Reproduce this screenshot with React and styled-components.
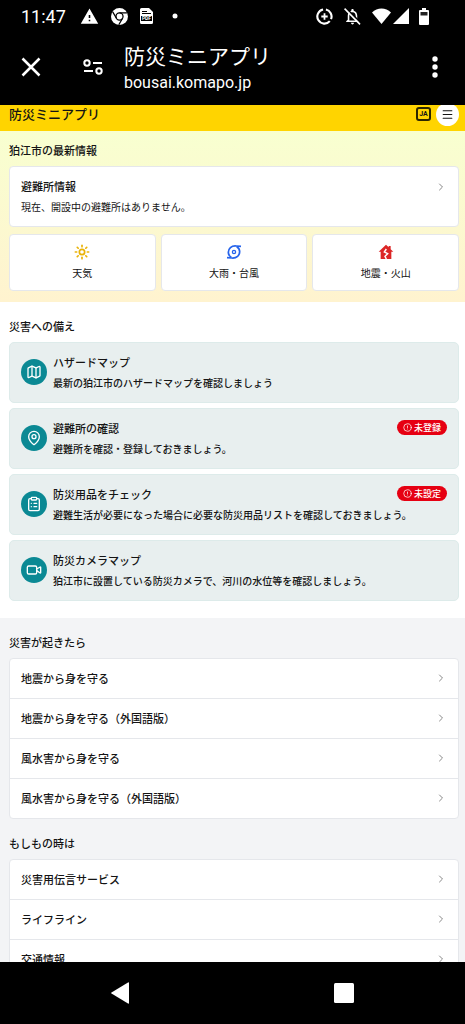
import React from 'react';
import styled, { createGlobalStyle, css } from 'styled-components';
import { ChevronRight, CircleAlert, ClipboardList, Map, MapPin, Menu, Sun, Video } from 'lucide-react';
import { MdNotificationsNone, MdWarning } from 'react-icons/md';

const GlobalStyle = createGlobalStyle`
    * {
        box-sizing: border-box;
    }
    body {
        margin: 0;
        background: #000;
        color: #141414;
        font-family: 'Noto Sans CJK JP', sans-serif;
    }
    a {
        color: inherit;
        text-decoration: none;
    }
    button {
        display: flex;
        align-items: center;
        justify-content: center;
        padding: 0;
        border: none;
        background: none;
        color: inherit;
        font: inherit;
        cursor: pointer;
    }
    svg {
        display: block;
        flex-shrink: 0;
    }
`;

const Phone = styled.div`
    display: flex;
    flex-direction: column;
    height: 100vh;
`;

const StatusBar = styled.div`
    display: flex;
    align-items: center;
    justify-content: space-between;
    flex-shrink: 0;
    height: 32px;
    padding: 0 36px 0 21px;
    color: #fff;
    font: 18px Roboto, sans-serif;

    .group {
        display: flex;
        align-items: center;
        gap: 12px;
    }
    .group.system {
        gap: 10px;
    }
    .clock {
        margin-right: 2px;
    }
    .signal {
        display: flex;
        gap: 2px;
    }
`;

const Toolbar = styled.header`
    display: flex;
    align-items: center;
    flex-shrink: 0;
    height: 73px;
    padding: 0 21px 4px;
    color: #fff;

    .titles {
        flex: 1;
        margin-left: 21px;
    }
    .title {
        font-size: 21px;
        line-height: 32px;
    }
    .url {
        font: 16px/24px Roboto, sans-serif;
    }
`;

const ToolButton = styled.button`
    width: ${props => props.$width}px;
    height: 40px;
    margin-right: ${props => props.$gap || 0}px;
`;

const Page = styled.main`
    flex: 1;
    min-height: 0;
    overflow: hidden;
    background: #f3f4f6;
`;

const AppBar = styled.div`
    display: flex;
    align-items: center;
    gap: 5px;
    height: 26px;
    padding: 0 6px 8px 9px;
    background: #ffd400;
    font-size: 13px;
    font-weight: 500;
    line-height: 18px;

    .name {
        flex: 1;
    }
`;

const LangButton = styled.button`
    && {
        width: 15px;
        height: 14px;
        border: 2px solid #2b2600;
        border-radius: 3px;
        font: bold 7px Roboto, sans-serif;
    }
`;

const MenuButton = styled.button`
    && {
        width: 23px;
        height: 23px;
        border-radius: 50%;
        background: #fff;
    }
`;

const Section = styled.section`
    padding: ${props => props.$pad || '0 6px 0 9px'};
    background: ${props => props.$bg || 'transparent'};
`;

const Heading = styled.h2`
    margin: 0 0 8px;
    font-size: 11px;
    font-weight: 500;
    line-height: 16px;
`;

const box = css`
    border: 1px solid #e5e7eb;
    border-radius: 4px;
    background: #fff;
`;

const ItemTitle = styled.div`
    font-size: 11px;
    font-weight: 500;
    line-height: 18px;
`;

const ItemText = styled.div`
    font-size: 10px;
    font-weight: ${props => props.$strong ? 500 : 400};
    line-height: 16px;
`;

const Notice = styled.a`
    ${box}
    display: flex;
    justify-content: space-between;
    height: 61px;
    padding: 10px 11px;

    .text {
        display: flex;
        flex-direction: column;
        gap: 4px;
    }
`;

const Chevron = styled(ChevronRight).attrs({ size: 12 })`
    margin-top: 4px;
    color: #888;
`;

const Tiles = styled.div`
    display: grid;
    grid-template-columns: repeat(3, 1fr);
    gap: 5px;
    margin-top: 7px;
`;

const Tile = styled.a`
    ${box}
    display: flex;
    flex-direction: column;
    align-items: center;
    gap: 5px;
    height: 57px;
    padding-top: 9px;
    font-size: 10px;
    line-height: 16px;
`;

const Cards = styled.div`
    display: flex;
    flex-direction: column;
    gap: 5px;
`;

const Card = styled.a`
    display: flex;
    align-items: center;
    gap: 6px;
    height: 61px;
    padding: 0 11px 2px;
    border: 1px solid #ddebea;
    border-radius: 5px;
    background: #e8efef;

    .body {
        flex: 1;
        display: flex;
        flex-direction: column;
        gap: 4px;
    }
    .row {
        display: flex;
        align-items: center;
        justify-content: space-between;
    }
`;

const IconCircle = styled.span`
    display: flex;
    align-items: center;
    justify-content: center;
    width: 26px;
    height: 26px;
    border-radius: 50%;
    background: #0b8994;
    color: #fff;
`;

const Badge = styled.span`
    display: flex;
    align-items: center;
    gap: 2px;
    height: 15px;
    padding: 0 6px;
    border-radius: 8px;
    background: #e60012;
    color: #fff;
    font-size: 9px;
    font-weight: 500;
`;

const List = styled.ul`
    ${box}
    margin: 0;
    padding: 0;
    list-style: none;

    li + li {
        border-top: 1px solid #e5e7eb;
    }
`;

const ListLink = styled.a`
    display: flex;
    align-items: center;
    justify-content: space-between;
    height: 39px;
    padding: 0 11px 2px;

    ${Chevron} {
        margin-top: 0;
    }
`;

const NavBar = styled.nav`
    display: flex;
    align-items: center;
    justify-content: space-around;
    flex-shrink: 0;
    height: 62px;
    padding: 0 8px;
    color: #fff;
`;

const ChromeIcon = () => (
    <svg width="17" height="17" viewBox="0 0 24 24">
        <circle cx="12" cy="12" r="12" fill="#fff" />
        <g fill="none" stroke="#000" strokeWidth="1.8">
            <circle cx="12" cy="12" r="5" />
            <path d="M12 7h10.5M7.7 14.5L2.4 5.5M16.3 14.5L11 23.6" />
        </g>
    </svg>
);

const PdfIcon = () => (
    <svg width="13" height="16" viewBox="0 0 13 16">
        <path d="M1.5 0H9l4 4v10.5a1.5 1.5 0 0 1-1.5 1.5h-10A1.5 1.5 0 0 1 0 14.5v-13A1.5 1.5 0 0 1 1.5 0z" fill="#fff" />
        <path d="M2 3.5h5M2 5.5h9" stroke="#000" />
        <rect x="1" y="8" width="11" height="5" fill="#000" />
        <text x="6.5" y="12.3" textAnchor="middle" fontFamily="Roboto" fontSize="5" fontWeight="700" fill="#fff">PDF</text>
    </svg>
);

const DataSaverIcon = () => (
    <svg width="17" height="17" viewBox="0 0 24 24" fill="none" stroke="#fff" strokeWidth="3">
        <path d="M14 2.2A10 10 0 0 1 21.2 15.8M19.5 18.5A10 10 0 1 1 10 2.2" />
        <path d="M12 7.5v9M7.5 12h9" strokeWidth="2.5" />
    </svg>
);

const BellOffIcon = () => (
    <svg width="19" height="19" viewBox="0 0 24 24">
        <MdNotificationsNone size={24} color="#fff" />
        <path d="M4 1.5L22.5 20" stroke="#000" strokeWidth="2" />
        <path d="M2 2L21.5 22" stroke="#fff" strokeWidth="2" />
    </svg>
);

const WifiIcon = () => (
    <svg width="19" height="16" viewBox="0 0 20 16" preserveAspectRatio="none">
        <path d="M10 16L0 4.5C5.5-.8 14.5-.8 20 4.5z" fill="#fff" />
    </svg>
);

const CellIcon = () => (
    <svg width="16" height="16" viewBox="0 0 16 16">
        <path d="M16 0v16H0z" fill="#fff" />
    </svg>
);

const BatteryIcon = () => (
    <svg width="10" height="17" viewBox="0 0 10 17">
        <path d="M3 0h4v2h2a1 1 0 0 1 1 1v13a1 1 0 0 1-1 1H1a1 1 0 0 1-1-1V3a1 1 0 0 1 1-1h2z" fill="#fff" />
        <path d="M1.5 4h7v3.5h-7z" fill="#222" />
    </svg>
);

const CloseIcon = () => (
    <svg width="20" height="20" viewBox="0 0 20 20" stroke="#fff" strokeWidth="2.5">
        <path d="M1.5 1.5l17 17M18.5 1.5l-17 17" />
    </svg>
);

const SiteInfoIcon = () => (
    <svg width="20" height="18" viewBox="0 0 20 18" fill="none" stroke="#fff" strokeWidth="2">
        <circle cx="4" cy="5" r="2.7" />
        <path d="M10 5h9M1 13h9" />
        <circle cx="16" cy="13" r="2.7" />
    </svg>
);

const MoreIcon = () => (
    <svg width="6" height="22" viewBox="0 0 6 22" fill="#fff">
        <circle cx="3" cy="3" r="2.7" />
        <circle cx="3" cy="11" r="2.7" />
        <circle cx="3" cy="19" r="2.7" />
    </svg>
);

const TyphoonIcon = () => (
    <svg width="16" height="16" viewBox="0 0 24 24" fill="none" stroke="#2563eb" strokeWidth="2.6">
        <circle cx="12" cy="12" r="2.4" strokeWidth="2" />
        <path d="M22.5 3.5L15 3C8 2.500 3.500 7 3.500 12.500C3.500 16 5 18.500 8 20" />
        <path d="M1.500 20.500L9 21C16 21.500 20.500 17 20.500 11.500C20.500 8 19 5.500 16 4" />
    </svg>
);

const QuakeHouseIcon = () => (
    <svg width="16" height="16" viewBox="0 0 24 24">
        <path d="M12 1L1 11.5h3V22.5h16V11.5h3L19 7.7V3h-3v1.8z" fill="#dc2626" />
        <path d="M12.5 7.5L9.5 12l5 2.5-4 4 2 4" fill="none" stroke="#fff" strokeWidth="2.2" />
    </svg>
);

const tiles = [
    { label: '天気', icon: <Sun size={16} color="#eab308" strokeWidth={2.5} /> },
    { label: '大雨・台風', icon: <TyphoonIcon /> },
    { label: '地震・火山', icon: <QuakeHouseIcon /> }
];

const cards = [
    { title: 'ハザードマップ', text: '最新の狛江市のハザードマップを確認しましょう', Icon: Map },
    { title: '避難所の確認', text: '避難所を確認・登録しておきましょう。', Icon: MapPin, badge: '未登録' },
    { title: '防災用品をチェック', text: '避難生活が必要になった場合に必要な防災用品リストを確認しておきましょう。', Icon: ClipboardList, badge: '未設定' },
    { title: '防災カメラマップ', text: '狛江市に設置している防災カメラで、河川の水位等を確認しましょう。', Icon: Video }
];

const disasterLinks = [
    '地震から身を守る',
    '地震から身を守る（外国語版）',
    '風水害から身を守る',
    '風水害から身を守る（外国語版）'
];

const emergencyLinks = ['災害用伝言サービス', 'ライフライン', '交通情報'];

const LinkList = ({ items }) => (
    <List>
        {items.map(item => (
            <li key={item}>
                <ListLink href="#">
                    <ItemTitle>{item}</ItemTitle>
                    <Chevron />
                </ListLink>
            </li>
        ))}
    </List>
);

const App = () => (
    <Phone>
        <GlobalStyle />
        <StatusBar>
            <div className="group">
                <span className="clock">11:47</span>
                <MdWarning size={19} />
                <ChromeIcon />
                <PdfIcon />
                <svg width="20" height="6" viewBox="0 0 20 6"><circle cx="10" cy="3" r="2.5" fill="#fff" /></svg>
            </div>
            <div className="group system">
                <DataSaverIcon />
                <BellOffIcon />
                <div className="signal">
                    <WifiIcon />
                    <CellIcon />
                </div>
                <BatteryIcon />
            </div>
        </StatusBar>
        <Toolbar>
            <ToolButton $width={20} $gap={42} aria-label="閉じる"><CloseIcon /></ToolButton>
            <ToolButton $width={20} aria-label="サイト情報"><SiteInfoIcon /></ToolButton>
            <div className="titles">
                <div className="title">防災ミニアプリ</div>
                <div className="url">bousai.komapo.jp</div>
            </div>
            <ToolButton $width={18} aria-label="その他"><MoreIcon /></ToolButton>
        </Toolbar>
        <Page>
            <AppBar>
                <span className="name">防災ミニアプリ</span>
                <LangButton>JA</LangButton>
                <MenuButton aria-label="メニュー"><Menu size={13} /></MenuButton>
            </AppBar>
            <Section $pad="11px 6px 11px 9px" $bg="linear-gradient(#f8ffd0, #fff3cf)">
                <Heading>狛江市の最新情報</Heading>
                <Notice href="#">
                    <div className="text">
                        <ItemTitle>避難所情報</ItemTitle>
                        <ItemText>現在、開設中の避難所はありません。</ItemText>
                    </div>
                    <Chevron />
                </Notice>
                <Tiles>
                    {tiles.map(tile => (
                        <Tile key={tile.label} href="#">
                            {tile.icon}
                            {tile.label}
                        </Tile>
                    ))}
                </Tiles>
            </Section>
            <Section $pad="16px 6px 17px 9px" $bg="#fff">
                <Heading>災害への備え</Heading>
                <Cards>
                    {cards.map(({ title, text, Icon, badge }) => (
                        <Card key={title} href="#">
                            <IconCircle><Icon size={16} /></IconCircle>
                            <div className="body">
                                <div className="row">
                                    <ItemTitle>{title}</ItemTitle>
                                    {badge && <Badge><CircleAlert size={9} />{badge}</Badge>}
                                </div>
                                <ItemText $strong>{text}</ItemText>
                            </div>
                        </Card>
                    ))}
                </Cards>
            </Section>
            <Section $pad="16px 6px 16px 9px">
                <Heading>災害が起きたら</Heading>
                <LinkList items={disasterLinks} />
            </Section>
            <Section>
                <Heading>もしもの時は</Heading>
                <LinkList items={emergencyLinks} />
            </Section>
        </Page>
        <NavBar>
            <button aria-label="戻る">
                <svg width="18" height="22" viewBox="0 0 18 22"><path d="M17 .5q1-.5 1 .5v20q0 1-1 .5L.5 11.6q-.8-.6 0-1.2z" fill="#fff" /></svg>
            </button>
            <button aria-label="アプリ履歴">
                <svg width="20" height="20" viewBox="0 0 20 20"><rect width="20" height="20" rx="1.5" fill="#fff" /></svg>
            </button>
        </NavBar>
    </Phone>
);

export default App;
